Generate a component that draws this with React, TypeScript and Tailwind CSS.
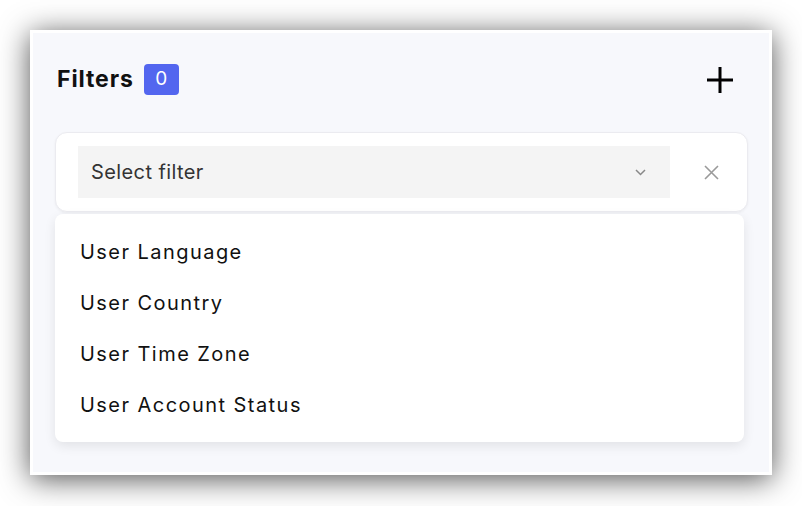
import React from "react";

const items = ["User Language", "User Country", "User Time Zone", "User Account Status"];

export default function App() {
  return (
    <div className="w-[802px] h-[506px] bg-white pt-[30px] pl-[30px]" style={{ fontFamily: "Inter, 'Noto Sans', sans-serif" }}>
      <div className="w-[742px] h-[445px] border-[3px] border-white bg-[#f7f8fc] shadow-[0_4px_28px_rgba(0,0,0,0.68)] pl-[22px] pr-[21px] pt-[31px]">
        <div className="flex items-center justify-between h-[31px]">
          <div className="flex items-center ml-[2px]">
            <span className="text-[23px] font-bold text-[#111] tracking-[0.9px]">Filters</span>
            <span className="ml-[10px] w-[35px] h-[31px] rounded-[4px] bg-[#5366ef] text-white text-[19px] flex items-center justify-center">0</span>
          </div>
          <svg width="26" height="26" viewBox="0 0 26 26" className="mr-[15px]">
            <path d="M13 0V26M0 13H26" stroke="#000" strokeWidth="3" />
          </svg>
        </div>
        <div className="mt-[37px] h-[80px] bg-white rounded-[12px] border border-[#ebebf0] shadow-[0_1px_3px_rgba(0,0,0,0.05)] flex items-center pl-[22px]">
          <div className="w-[592px] h-[52px] bg-[#f4f4f4] flex items-center justify-between pl-[13px] pr-[24px]">
            <span className="text-[20px] text-[#333] tracking-[0.4px]">Select filter</span>
            <svg width="11" height="7" viewBox="0 0 11 7">
              <path d="M1 1L5.5 5.5L10 1" fill="none" stroke="#888" strokeWidth="1.5" />
            </svg>
          </div>
          <svg width="15" height="15" viewBox="0 0 15 15" className="ml-[34px]">
            <path d="M1 1L14 14M14 1L1 14" stroke="#9a9a9a" strokeWidth="1.6" />
          </svg>
        </div>
        <div className="mt-[2px] w-[689px] bg-white rounded-[8px] shadow-[0_4px_12px_rgba(0,0,0,0.09)] py-[12px]">
          {items.map((t) => (
            <div key={t} className="h-[51px] flex items-center pl-[25px] text-[20px] text-[#111] tracking-[1.45px]">
              {t}
            </div>
          ))}
        </div>
      </div>
    </div>
  );
}
